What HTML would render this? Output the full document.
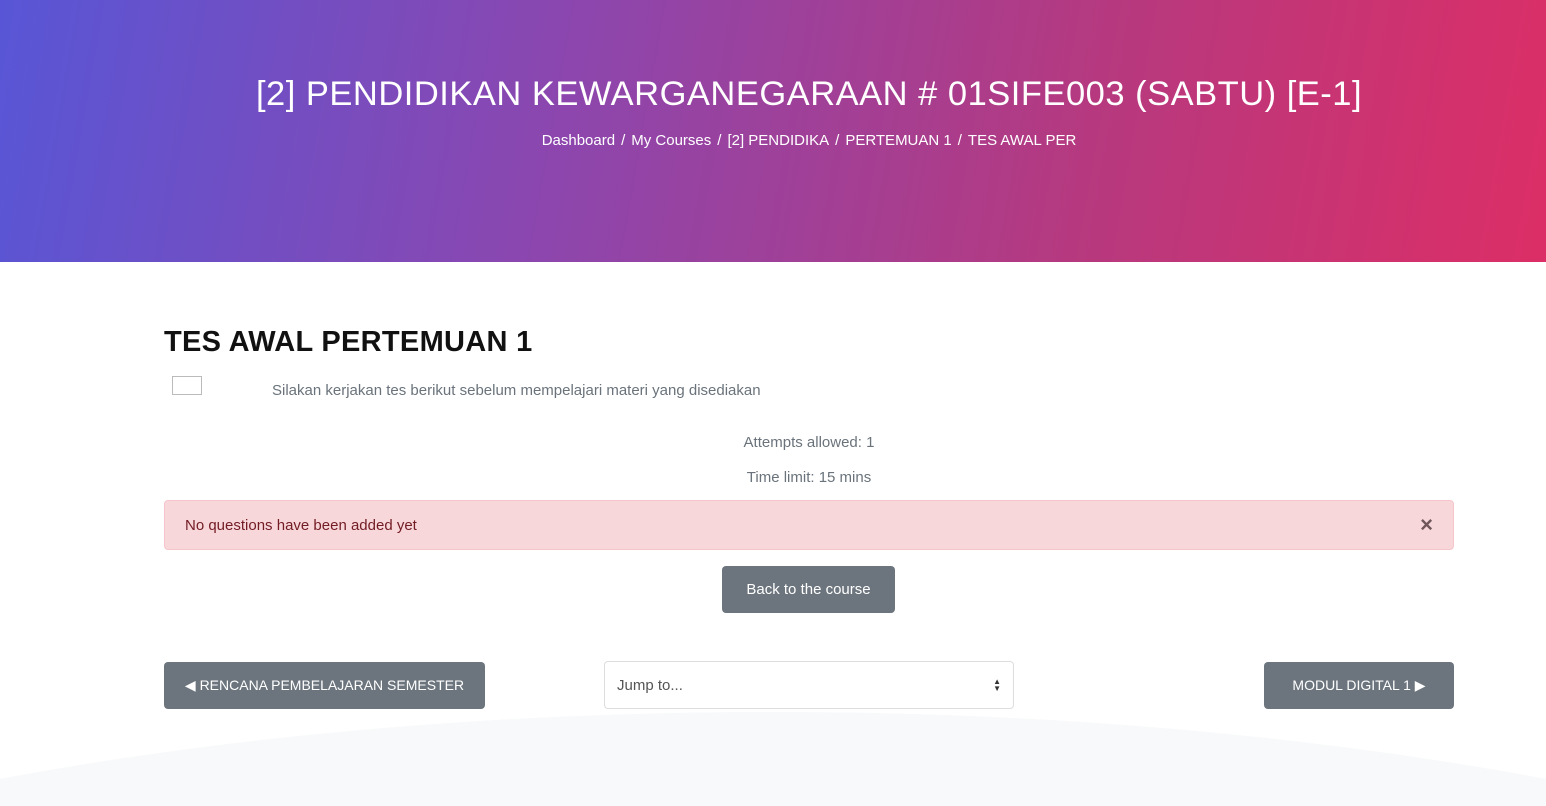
<!DOCTYPE html>
<html style="width:1546px;height:806px;overflow:hidden"><head><meta charset="utf-8"><style>
*{box-sizing:border-box;margin:0;padding:0}
body{width:1546px;height:806px;overflow:hidden;background:#fff;font-family:"Liberation Sans",sans-serif;position:relative}
.hdr{position:absolute;left:0;top:0;width:1546px;height:262px;overflow:hidden;background:linear-gradient(100deg,#5856d6 0%,#8a47b0 35%,#b6397f 70%,#dc2e66 100%)}
.hdr h1{position:absolute;top:75px;left:0;width:1546px;padding-left:72px;text-align:center;color:#fff;font-weight:normal;font-size:34.5px;letter-spacing:0.5px;white-space:nowrap}
.bc{position:absolute;top:132px;left:0;width:1546px;padding-left:72px;text-align:center;color:#fff;font-size:15px}
.bc span{margin:0 6px}
.wsvg{position:absolute;left:0;top:700px;display:block}
h2{position:absolute;left:164px;top:326px;font-size:29px;font-weight:bold;color:#111;letter-spacing:0.3px}
.img{position:absolute;left:172px;top:376px;width:30px;height:19px;border:1px solid #bbb}
.intro{position:absolute;left:272px;top:382px;font-size:15px;color:#6a737b}
.c{position:absolute;left:164px;width:1290px;text-align:center;font-size:15px;color:#6a737b}
.alert{position:absolute;left:164px;top:500px;width:1290px;height:50px;background:#f8d7da;border:1px solid #f5c6cb;border-radius:4px;color:#721c24;font-size:15px;padding:16px 20px}
.alert b{position:absolute;right:20px;top:11px;font-size:22px;color:#6f5659;font-weight:bold}
.btn{position:absolute;background:#6c757d;color:#fff;font-size:15px;border-radius:4px;display:flex;align-items:center;justify-content:center}
.sel{position:absolute;left:604px;top:661px;width:410px;height:48px;border:1px solid #ddd;border-radius:4px;background:#fff;font-size:15px;color:#555;padding:15px 12px}
.sel i{position:absolute;right:12px;top:16px;font-size:8px;line-height:7px;font-style:normal;color:#333}
</style></head><body>
<div class="hdr">
<h1>[2] PENDIDIKAN KEWARGANEGARAAN # 01SIFE003 (SABTU) [E-1]</h1>
<div class="bc">Dashboard<span>/</span>My Courses<span>/</span>[2] PENDIDIKA<span>/</span>PERTEMUAN 1<span>/</span>TES AWAL PER</div>
</div>
<svg class="wsvg" width="1546" height="106" viewBox="0 0 1546 106"><ellipse cx="773" cy="462" rx="1473" ry="450" fill="#f8f9fa"/></svg>
<h2>TES AWAL PERTEMUAN 1</h2>
<div class="img"></div>
<div class="intro">Silakan kerjakan tes berikut sebelum mempelajari materi yang disediakan</div>
<div class="c" style="top:434px">Attempts allowed: 1</div>
<div class="c" style="top:469px">Time limit: 15 mins</div>
<div class="alert">No questions have been added yet<b>×</b></div>
<div class="btn" style="left:722px;top:566px;width:173px;height:47px">Back to the course</div>
<div class="btn" style="left:164px;top:662px;width:321px;height:47px;font-size:14px">◀ RENCANA PEMBELAJARAN SEMESTER</div>
<div class="sel">Jump to...<i>▲<br>▼</i></div>
<div class="btn" style="left:1264px;top:662px;width:190px;height:47px;font-size:14px">MODUL DIGITAL 1 ▶</div>
</body></html>
